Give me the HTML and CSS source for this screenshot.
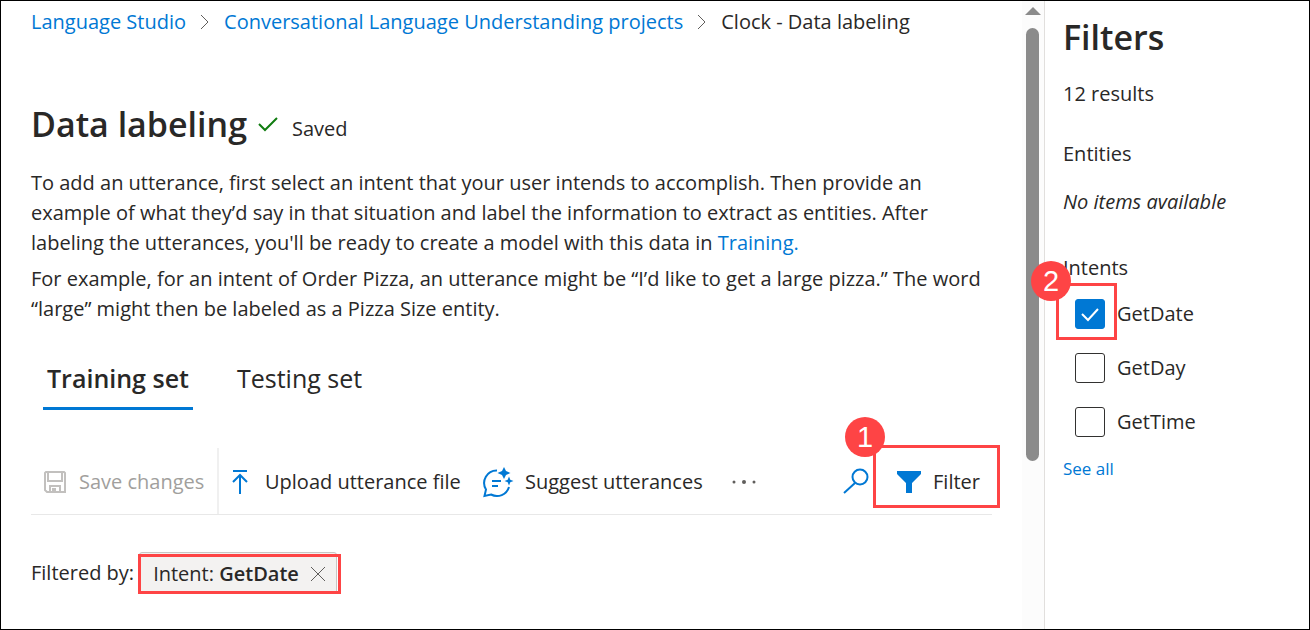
FILE: index.html
```html
<!DOCTYPE html>
<html lang="en">
<head>
<meta charset="utf-8">
<title>Clock - Data labeling</title>
<link rel="stylesheet" href="styles.css">
</head>
<body>
<div class="page">
  <main class="content">
    <nav class="breadcrumb" aria-label="Breadcrumb">
      <a href="#">Language Studio</a>
      <svg class="chevron" viewBox="0 0 10 16"><path d="M1 1l7 7-7 7"/></svg>
      <a href="#">Conversational Language Understanding projects</a>
      <svg class="chevron" viewBox="0 0 10 16"><path d="M1 1l7 7-7 7"/></svg>
      <span>Clock - Data labeling</span>
    </nav>

    <header class="title-row">
      <h1 class="title">Data labeling</h1>
      <svg class="saved-icon" viewBox="0 0 20 16"><path d="M1 8l6 6L19 2"/></svg>
      <span class="saved-text">Saved</span>
    </header>

    <div class="intro">
      <p>To add an utterance, first select an intent that your user intends to accomplish. Then provide an example of what they’d say in that situation and label the information to extract as entities. After labeling the utterances, you'll be ready to create a model with this data in <a href="#">Training.</a></p>
      <p>For example, for an intent of Order Pizza, an utterance might be “I’d like to get a large pizza.” The word “large” might then be labeled as a Pizza Size entity.</p>
    </div>

    <div class="tabs" role="tablist">
      <button class="tab tab-active" role="tab" aria-selected="true">Training set</button>
      <button class="tab" role="tab" aria-selected="false">Testing set</button>
    </div>

    <div class="commands">
      <button class="command command-save" disabled>
        <svg class="icon-save" viewBox="0 0 22 22"><path d="M2 1h18l1 1v19H3l-2-2V2zM4 1v9h14V1M6 21v-6h10v6M9 21v-3h2v3"/></svg>
        Save changes
      </button>
      <button class="command command-upload">
        <svg class="icon-upload" viewBox="0 0 16 24"><path d="M1 1h14M8 24V5M1 12l7-7 7 7"/></svg>
        Upload utterance file
      </button>
      <button class="command command-suggest">
        <svg class="icon-suggest" viewBox="0 0 30 30"><path class="line" d="M14 3.5A12.500 12.500 0 0 0 3 22.500L1.500 29l6.500-1.500A12.500 12.500 0 0 0 26 20M9 14h9M9 19h6"/><path class="spark" d="M21 0l2 4 4.500 2L23 8l-2 4-2-4-4.500-2L19 4zM26 9.500l1.300 3.200 3.200 1.300-3.200 1.300L26 18.500l-1.300-3.200-3.200-1.300 3.200-1.300z"/></svg>
        Suggest utterances
      </button>
      <button class="command command-more" aria-label="More commands">
        <svg class="icon-more" viewBox="0 0 24 4"><circle cx="2" cy="2" r="1.500"/><circle cx="12" cy="2" r="2"/><circle cx="22" cy="2" r="1.500"/></svg>
      </button>
      <button class="command command-search" aria-label="Search">
        <svg class="icon-search" viewBox="0 0 26 26"><circle cx="17" cy="9" r="7.500"/><path d="M12 15L1 25"/></svg>
      </button>
      <div class="marked">
        <button class="command command-filter">
          <svg class="icon-filter" viewBox="0 0 24 22"><path d="M0 0h24v3l-9 9v10H9V12L0 3z"/></svg>
          Filter
        </button>
        <span class="outline outline-filter"><span class="step">1</span></span>
      </div>
    </div>

    <div class="filtered">
      <span>Filtered by:</span>
      <div class="marked">
        <button class="chip">
          <span>Intent: <strong>GetDate</strong></span>
          <svg class="icon-close" viewBox="0 0 14 14"><path d="M0 0l14 14M14 0L0 14"/></svg>
        </button>
        <span class="outline outline-chip"></span>
      </div>
    </div>
  </main>

  <div class="scroller" aria-hidden="true">
    <svg class="scroll-arrow" viewBox="0 0 16 8"><path d="M0 8l8-8 8 8z"/></svg>
    <div class="scroll-thumb"></div>
    <div class="scroll-rest"></div>
  </div>

  <aside class="filters">
    <h2 class="filters-title">Filters</h2>
    <p class="results">12 results</p>
    <h3 class="group-title">Entities</h3>
    <p class="empty">No items available</p>
    <h3 class="group-title intents-title">Intents</h3>
    <ul class="options">
      <li class="option marked">
        <input class="check" type="checkbox" id="getdate" checked><label for="getdate">GetDate</label>
        <svg class="tick" viewBox="0 0 18 13"><path d="M1 6l6 6L17 1"/></svg>
        <span class="outline outline-check"><span class="step step-two">2</span></span>
      </li>
      <li class="option"><input class="check" type="checkbox" id="getday"><label for="getday">GetDay</label></li>
      <li class="option"><input class="check" type="checkbox" id="gettime"><label for="gettime">GetTime</label></li>
    </ul>
    <a class="see-all" href="#">See all</a>
  </aside>
</div>
</body>
</html>
```
FILE: styles.css
```css
* { box-sizing: border-box; }

body {
  margin: 0;
  background: #fff;
  color: #292827;
  font: 20px/30px "Open Sans", "Noto Sans", sans-serif;
}

h1, h2, h3, p, ul { margin: 0; padding: 0; }
a { color: #0078d4; text-decoration: none; }
button { border: 0; padding: 0; background: none; color: inherit; font: inherit; }
svg { display: block; flex: none; fill: none; overflow: visible; }

.page {
  display: grid;
  grid-template-columns: 1fr 22px 265px;
  min-height: 100vh;
  border: 1px solid #000;
}

.content { padding: 6px 30px 30px; min-width: 0; }

.breadcrumb { display: flex; align-items: center; gap: 14px; white-space: nowrap; }
.chevron { width: 10px; height: 16px; stroke: #605e5c; }

.title-row { display: flex; align-items: center; margin-top: 63px; }
.title { font-size: 34px; line-height: 48px; font-weight: 600; }
.saved-icon { width: 20px; height: 16px; margin: 0 14px 0 11px; stroke: #107c10; stroke-width: 2; }
.saved-text { padding-top: 10px; }

.intro { margin-top: 20px; }
.intro p + p { margin-top: 6px; }

.tabs { display: flex; gap: 40px; margin: 26px 0 0 12px; }
.tab { height: 60px; padding: 0 4px 2px; font-size: 25px; border-bottom: 3px solid transparent; }
.tab-active { font-weight: 600; border-color: #0078d4; }

.commands { display: flex; height: 67px; margin-top: 38px; border-bottom: 1px solid #e8e8e8; white-space: nowrap; }
.command { display: flex; align-items: center; height: 66px; padding-top: 2px; }
.command-save { width: 188px; padding-left: 13px; gap: 13px; color: #a19f9d; border-right: 2px solid #f0f0f0; }
.icon-save { width: 22px; height: 22px; stroke: #c2c0be; stroke-width: 2; }
.command-upload { width: 251px; padding-left: 13px; gap: 17px; }
.icon-upload { width: 16px; height: 24px; stroke: #0078d4; stroke-width: 2; }
.command-suggest { width: 250px; padding-left: 13px; gap: 12px; }
.icon-suggest { width: 30px; height: 30px; }
.icon-suggest .line { stroke: #0078d4; stroke-width: 2; }
.icon-suggest .spark { fill: #0078d4; }
.command-more { padding-left: 12px; }
.icon-more { width: 24px; height: 4px; fill: #605e5c; }
.command-search { margin-left: auto; padding: 0 4px 0 0; }
.icon-search { width: 26px; height: 26px; stroke: #0078d4; stroke-width: 2; }
.command-filter { padding: 2px 12px 0 24px; gap: 12px; }
.icon-filter { width: 24px; height: 22px; fill: #0078d4; }

.marked { position: relative; }
.outline { position: absolute; border: 3px solid #fe4445; pointer-events: none; }
.outline-filter { inset: -3px -8px 6px 0; }
.outline-chip { inset: 2px -4px 0 -1px; }
.outline-check { inset: -17px auto -11px -19px; width: 61px; }
.step {
  position: absolute;
  left: -31px;
  top: -31px;
  width: 40px;
  height: 40px;
  border-radius: 50%;
  background: #fe4445;
  color: #fff;
  font: 29px/40px "Liberation Sans", Arial, sans-serif;
  text-align: center;
}
.step-two { left: -28px; top: -25px; }

.filtered { display: flex; align-items: center; gap: 5px; margin-top: 37px; }
.chip {
  display: flex;
  align-items: center;
  gap: 12px;
  height: 42px;
  padding: 2px 11px 0 13px;
  background: #f3f2f1;
  border: 1px solid #c8c6c4;
  border-radius: 3px;
}
.chip strong { font-weight: 600; }
.icon-close { width: 14px; height: 14px; stroke: #605e5c; }

.scroller {
  display: grid;
  grid-template-rows: 8px 433px 1fr;
  row-gap: 13px;
  padding: 6px 0 0 3px;
  background: #fcfcfc;
}
.scroll-arrow { width: 16px; height: 8px; fill: #8b8b8b; }
.scroll-thumb { width: 13px; margin-left: 1px; border-radius: 7px; background: #8b8b8b; }

.filters { padding: 12px 18px; border-left: 1px solid #e1dfdd; }
.filters-title { font-size: 34px; line-height: 48px; font-weight: 600; }
.results { margin-top: 18px; }
.group-title { font-size: 20px; font-weight: 500; margin-top: 30px; }
.empty { margin-top: 18px; font-style: italic; }
.intents-title { margin-top: 36px; }
.options { display: grid; gap: 24px; margin: 16px 0 0 12px; list-style: none; }
.option { display: flex; align-items: center; gap: 12px; }
.check {
  appearance: none;
  width: 30px;
  height: 30px;
  margin: 0;
  border: 1px solid #323130;
  border-radius: 3px;
  background: #fff;
}
.check:checked { background: #0078d4; border-color: #0078d4; }
.tick { position: absolute; left: 6px; top: 9px; width: 18px; height: 13px; stroke: #fff; stroke-width: 2; pointer-events: none; }
.outline-check { top: -16px; }
.see-all { display: block; margin-top: 17px; font-size: 17px; }
```
